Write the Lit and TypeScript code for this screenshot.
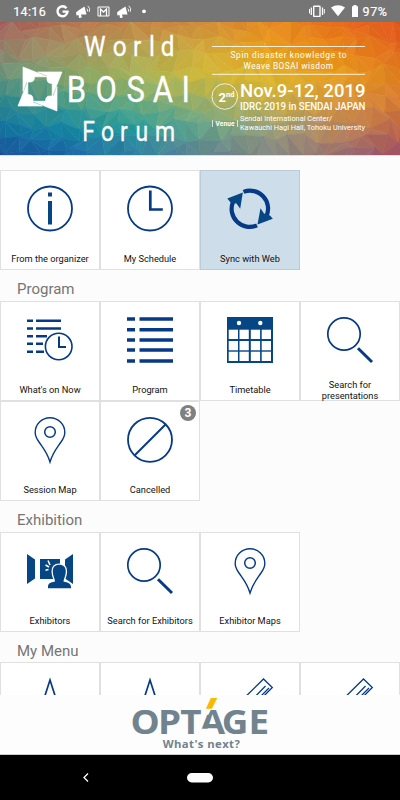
import { LitElement, html, svg, css, nothing } from "lit";
import { customElement, property } from "lit/decorators.js";

const PALETTE: string[][] = [
  ["a65a58", "b47450", "c58245", "d08a3a", "e58a22", "e66e1a", "e2531e"],
  ["94806a", "a39360", "b3a352", "cfaa3c", "eaa01c", "ea8a18", "e26a1e"],
  ["68957c", "86a468", "a4b25a", "cfb93a", "deb42a", "e8a01e", "e0801f"],
  ["2c868c", "469a86", "68a97e", "9bb068", "c8b044", "d8983a", "d67a34"],
  ["1474a0", "1488a2", "259a9a", "62a28a", "96a078", "b8865a", "c0684a"],
  ["1a4f9c", "1b66a6", "2f7ba2", "5f8290", "808484", "987270", "9c4c64"],
];

const channels = (c: string) => [0, 2, 4].map((i) => parseInt(c.slice(i, i + 2), 16));

function colourAt(x: number, y: number, shade: number): string {
  const gx = Math.min(5.999, Math.max(0, (x / 400) * 6));
  const gy = Math.min(4.999, Math.max(0, (y / 133) * 5));
  const i = Math.floor(gx), j = Math.floor(gy), u = gx - i, v = gy - j;
  const [a, b, c, d] = [PALETTE[j][i], PALETTE[j][i + 1], PALETTE[j + 1][i], PALETTE[j + 1][i + 1]].map(channels);
  const mix = a.map((_, k) =>
    Math.round((a[k] * (1 - u) + b[k] * u) * (1 - v) + (c[k] * (1 - u) + d[k] * u) * v + shade));
  return `rgb(${mix.join(",")})`;
}

/** Low-poly mesh on a jittered grid. */
function facets() {
  let seed = 77;
  const rnd = () => ((seed = (seed * 16807) % 2147483647) / 2147483647);
  const step = 14, cols = 31, rows = 12;
  const pts: number[][][] = [];
  for (let r = 0; r < rows; r++) {
    pts.push([]);
    for (let c = 0; c < cols; c++)
      pts[r].push([(c - 0.5) * step + (rnd() - 0.5) * 11, (r - 0.7) * step + (rnd() - 0.5) * 11]);
  }
  const out = [];
  for (let r = 0; r < rows - 1; r++)
    for (let c = 0; c < cols - 1; c++) {
      const [p, q, s, t] = [pts[r][c], pts[r][c + 1], pts[r + 1][c], pts[r + 1][c + 1]];
      const tris = rnd() > 0.5 ? [[p, q, s], [q, t, s]] : [[p, q, t], [p, t, s]];
      for (const tri of tris) {
        const x = (tri[0][0] + tri[1][0] + tri[2][0]) / 3;
        const y = (tri[0][1] + tri[1][1] + tri[2][1]) / 3;
        const f = colourAt(x, y, (rnd() - 0.5) * 8);
        out.push(svg`<polygon points=${tri.map((k) => k.join(",")).join(" ")} fill=${f} stroke=${f} stroke-width="0.6"/>`);
      }
    }
  return out;
}

const search = svg`<circle cx="17" cy="17" r="16.2" fill="none" stroke-width="1.7"/><path d="M31 31.300L45 45" stroke-width="3"/>`;
const pin = svg`<path d="M23 45C20 35 16 31 12 25C9.500 21.500 8.200 19 8.200 15.500A14.800 14.800 0 0 1 37.800 15.500C37.800 19 36.500 21.500 34 25C30 31 26 35 23 45Z" fill="none" stroke-width="1.400"/><circle cx="23" cy="15" r="5.300" fill="none" stroke-width="1.500"/>`;
const peak = svg`<path d="M14 30L23 2L32 30" fill="none" stroke-width="1.700"/>`;
const pencil = svg`<path d="M6 31L36.500 1L45.300 9.500L22 33M38.500 8L16 31M42 10L19 33" fill="none" stroke-width="1.300"/>`;

const ICONS: Record<string, unknown> = {
  info: svg`<circle cx="23" cy="22.500" r="22" fill="none" stroke-width="1.800"/><path d="M21 6.500h4v4h-4zM21 15h4v23.500h-4z" stroke="none"/>`,
  clock: svg`<circle cx="23" cy="22.500" r="22" fill="none" stroke-width="1.800"/><path d="M23.300 4.500V23.500H35.800" fill="none" stroke-width="2.700"/>`,
  sync: svg`<path d="M16.500 5.900A18 18 0 0 1 39.500 30M30 39.300A18 18 0 0 1 6 16" fill="none" stroke-width="4.200"/><path d="M0.300 12.500L15.800 6.500L13.200 22.700L9.500 17.500L4 17ZM45.800 32.700L30.500 38.500L33.500 22.300L37 27.500L43 29.500Z" stroke="none"/>`,
  now: svg`<path d="M0 3.700h6M0 11.500h6M0 19.200h6M0 26.800h6M0 34.800h6M9 3.700h25M9 11.500h25M9 19.200h11M9 26.800h7M9 34.800h8" stroke-width="2.500"/><circle cx="31.700" cy="29.500" r="13.300" fill="none" stroke-width="1.600"/><path d="M32 19.500V30h7" fill="none" stroke-width="2"/>`,
  list: svg`<path d="M0 2h8M0 12.700h8M0 23h8M0 33h8M0 44h8M12.500 2h33.500M12.500 12.700h33.500M12.500 23h33.500M12.500 33h33.500M12.500 44h33.500" stroke-width="3.600"/>`,
  table: svg`<path d="M0 0h46v46H0z" stroke="none"/><g fill="#fff" stroke="none"><circle cx="12" cy="6" r="2.200"/><circle cx="33.300" cy="6" r="2.200"/>${[12.7, 24, 34.7].map((y) => [1.7, 12.5, 23.8, 34.7].map((x) => svg`<rect x=${x} y=${y} width="9.300" height="9.300"/>`))}</g>`,
  search,
  pin,
  cancel: svg`<circle cx="23" cy="22.800" r="22" fill="none" stroke-width="1.800"/><path d="M7.500 38.500L38.500 7.500" stroke-width="2"/>`,
  booth: svg`<path d="M0 6L8 11.500V30.500L0 36zM46 6L38 11.500V30.500L46 36zM13 11h20v20H13z" stroke="none"/><path d="M21 40.300V39C21 35.500 23 34.500 28 33.500C28 31 25.800 28 25.800 23.500C25.800 19 28 16.800 32.200 16.800C36.500 16.800 38.800 19 38.800 23.500C38.800 28 36.500 31 36.500 33.500C41 34.500 44 35.500 44 39V40.300z" stroke="#fff" stroke-width="2.600" paint-order="stroke"/><path d="M18.500 17L22 19M21 12.500L23 17M18.500 22.200L21.500 21.500" stroke="#fff" stroke-width="1.500"/>`,
  peak,
  pencil,
};

@customElement("menu-tile")
class MenuTile extends LitElement {
  @property() icon = "";
  @property() label = "";
  @property() badge = "";
  @property({ type: Boolean, reflect: true }) active = false;
  static styles = css`
    :host {
      display: flex; flex-direction: column; align-items: center; position: relative;
      box-sizing: border-box; width: 100px; height: 100px; padding-top: 15px;
      background: #fff; border: 1px solid #e0e0e0;
    }
    :host([active]) { background: #cddde9; border-color: #bccbd6; }
    .icon { width: 46px; height: 46px; flex: none; fill: #064684; stroke: #063a86; overflow: visible; }
    .label {
      height: 22px; margin-top: 16px; display: flex; align-items: center; justify-content: center;
      font-size: 9.250px; line-height: 11px; text-align: center; color: #111; white-space: pre;
    }
    .badge {
      position: absolute; top: 3px; right: 3px; width: 16px; height: 16px; border-radius: 50%;
      background: #808080; color: #fff; font: bold 12px/16.500px Roboto, sans-serif; text-align: center;
    }
  `;
  render() {
    return html`<svg class="icon" viewBox="0 0 46 46">${ICONS[this.icon]}</svg>
      <div class="label">${this.label}</div>
      ${this.badge ? html`<span class="badge">${this.badge}</span>` : nothing}`;
  }
}

interface Item { icon: string; label: string; badge?: string; active?: boolean }
const SECTIONS: { title?: string; items: Item[] }[] = [
  { items: [
    { icon: "info", label: "From the organizer" },
    { icon: "clock", label: "My Schedule" },
    { icon: "sync", label: "Sync with Web", active: true },
  ] },
  { title: "Program", items: [
    { icon: "now", label: "What's on Now" },
    { icon: "list", label: "Program" },
    { icon: "table", label: "Timetable" },
    { icon: "search", label: "Search for\npresentations" },
    { icon: "pin", label: "Session Map" },
    { icon: "cancel", label: "Cancelled", badge: "3" },
  ] },
  { title: "Exhibition", items: [
    { icon: "booth", label: "Exhibitors" },
    { icon: "search", label: "Search for Exhibitors" },
    { icon: "pin", label: "Exhibitor Maps" },
  ] },
  { title: "My Menu", items: [
    { icon: "peak", label: "" },
    { icon: "peak", label: "" },
    { icon: "pencil", label: "" },
    { icon: "pencil", label: "" },
  ] },
];

@customElement("app-root")
class AppRoot extends LitElement {
  static styles = css`
    :host {
      display: flex; flex-direction: column; width: 400px; height: 800px; overflow: hidden;
      background: #fcfcfc; font-family: Roboto, sans-serif;
    }
    svg { display: block; }
    .status { flex: none; background: #757575; }
    .banner { flex: none; border-bottom: 1px solid #dde; }
    .content { flex: 1; min-height: 0; overflow: hidden; padding-top: 14px; }
    .tiles { display: flex; flex-wrap: wrap; }
    .title { margin: 0; padding-left: 17px; height: 31px; font-size: 15px; font-weight: 400; line-height: 38px; color: #757575; }
    .title:last-of-type { height: 30px; }
    .ad { flex: none; height: 60px; background: #fdfdfd; border-bottom: 1px solid #ccc; box-sizing: border-box; }
    .nav { flex: none; background: #000; }
    .dp { font-family: Roboto, sans-serif; fill: #fff; }
    .word { font-family: Roboto, sans-serif; fill: #fff; stroke: #fff; stroke-width: 0.3; }
    .brand { font: 700 34px "Open Sans", sans-serif; fill: #70838e; }
    .slogan { font: 700 11.500px "Open Sans", sans-serif; fill: #70838e; }
  `;

  private megaphone(x: number) {
    return svg`<g transform="translate(${x} 5)" fill="#fff"><path d="M0 7.500L3 5L8.500 1.500L10.500 9.500L5 9.500L5.800 12.500L3 13L2.500 10L0.500 10.500Z"/><path d="M10.800 3.500q1.300 1.200 .6 3M11.800 0.800q3 2.500 1.400 6" fill="none" stroke="#fff" stroke-width="0.900"/></g>`;
  }

  private statusBar() {
    return html`<svg class="status" width="400" height="22" viewBox="0 0 400 22">
      <text class="dp" x="13.200" y="16" font-size="12.500" textLength="32.500" stroke="#fff" stroke-width="0.200">14:16</text>
      <path d="M66.500 8.200A5 5 0 1 0 67.500 11.600H62.600" fill="none" stroke="#fff" stroke-width="2.400"/>
      ${this.megaphone(76)}
      <path d="M98 7h11v9h-11z" fill="none" stroke="#fff" stroke-width="1"/><path d="M100.500 16V9L103.500 12L106.500 9V16" fill="none" stroke="#fff" stroke-width="1.300"/>
      ${this.megaphone(117)}
      <circle cx="144" cy="11.300" r="1.900" fill="#fff"/>
      <g fill="none" stroke="#fff"><rect x="313.700" y="6.200" width="6.300" height="10.200" rx="0.500" stroke-width="1.400"/><path d="M311.300 7.500v7.500M322.500 7.500v7.500" stroke-width="1.300"/><path d="M309.500 9v4.500M324.300 9v4.500" stroke-width="1"/></g>
      <path d="M331 7.500Q338 2.800 345 7.500L338 16.300Z" fill="#fff"/>
      <path d="M352 6.300h1.500V5h3v1.300H358V17h-6z" fill="#fff"/>
      <text class="dp" x="362.500" y="16" font-size="12.500" textLength="24.500" stroke="#fff" stroke-width="0.200">97%</text>
    </svg>`;
  }

  private banner() {
    const blade = "M-17 -22L7.500 -12.200L-5.500 -12.200L-6 -9L-7.500 -7.500L-9.500 -7L-13.500 -7L-17 2.300Z";
    const word = (y: number, size: number, sx: number, xs: number[], s: string) =>
      svg`<text class="word" transform="scale(${sx} 1)" x=${xs.map((v) => v / sx).join(" ")} y=${y} font-size=${size}>${s}</text>`;
    return html`<svg class="banner" width="400" height="133" viewBox="0 0 400 133">
      ${facets()}
      <g transform="translate(40 67)" fill="#fff" stroke="#fff" stroke-width="0.700" stroke-linejoin="round">
        ${[0, 90, 180, 270].map((a) => svg`<path d=${blade} transform="rotate(${a})"/>`)}
      </g>
      ${word(34, 27, 0.9, [84, 112.8, 133, 149, 160.8], "World")}
      ${word(80, 37, 0.84, [66.8, 95.4, 126.5, 152.8, 181.5], "BOSAI")}
      ${word(119, 27, 0.85, [82.3, 101, 120, 135.5, 155], "Forum")}
      <path d="M212 24.500H365M212 52.300H365" stroke="#fff" stroke-opacity="0.850" stroke-width="1"/>
      <text class="dp" x="230.500" y="36.300" font-size="8.300" textLength="116">Spin disaster knowledge to</text>
      <text class="dp" x="243.500" y="47" font-size="8.300" textLength="89.500">Weave BOSAI wisdom</text>
      <circle cx="224.800" cy="74.500" r="12.800" fill="none" stroke="#fff" stroke-width="0.800"/>
      <text class="dp" x="218.500" y="80" font-size="13" font-weight="700">2</text>
      <text class="dp" x="226" y="75" font-size="7" font-weight="700" textLength="8.500" lengthAdjust="spacingAndGlyphs">nd</text>
      <text class="dp" x="240" y="75.300" font-size="18.500" font-weight="500" textLength="125.500" lengthAdjust="spacingAndGlyphs">Nov.9-12, 2019</text>
      <text class="dp" x="240" y="88" font-size="10.800" font-weight="500" textLength="125.500" lengthAdjust="spacingAndGlyphs">IDRC 2019 in SENDAI JAPAN</text>
      <path d="M212.500 98v7M237.500 98v7" stroke="#fff" stroke-width="0.700"/>
      <text class="dp" x="215.500" y="104" font-size="6.500" font-weight="700" textLength="19">Venue</text>
      <text class="dp" x="240" y="99" font-size="7.200" textLength="92" lengthAdjust="spacingAndGlyphs">Sendai International Center/</text>
      <text class="dp" x="240" y="108" font-size="7.200" textLength="125" lengthAdjust="spacingAndGlyphs">Kawauchi Hagi Hall, Tohoku University</text>
    </svg>`;
  }

  render() {
    const wide = 1.1;
    const brandX = [129.2, 157.3, 180, 199.8, 222, 249.2].map((v) => v / wide).join(" ");
    return html`
      ${this.statusBar()} ${this.banner()}
      <div class="content">
        ${SECTIONS.map((s) => html`
          ${s.title ? html`<h2 class="title">${s.title}</h2>` : nothing}
          <div class="tiles">
            ${s.items.map((t) => html`<menu-tile .icon=${t.icon} .label=${t.label} .badge=${t.badge ?? ""} ?active=${t.active}></menu-tile>`)}
          </div>`)}
      </div>
      <svg class="ad" width="400" height="60" viewBox="0 0 400 60">
        <text class="brand" y="39.300" transform="scale(${wide} 1)" x=${brandX}>OPTAGE</text>
        <path d="M198 34.200H215.500L217 41H198Z" fill="#fdfdfd"/>
        <path d="M204.500 14.500H211.300L208.500 20H204.500Z" fill="#fdfdfd"/>
        <path d="M211 3H217.500L212 14H206Z" fill="#fbb900"/>
        <text class="slogan" x="162" y="53.500" textLength="78.500">What's next?</text>
      </svg>
      <svg class="nav" width="400" height="45" viewBox="0 0 400 45">
        <path d="M88 18.500L84 22.500L88 26.500" fill="none" stroke="#fff" stroke-width="1.300"/>
        <rect x="187" y="18" width="26" height="9.500" rx="4.700" fill="#fff"/>
      </svg>`;
  }
}
